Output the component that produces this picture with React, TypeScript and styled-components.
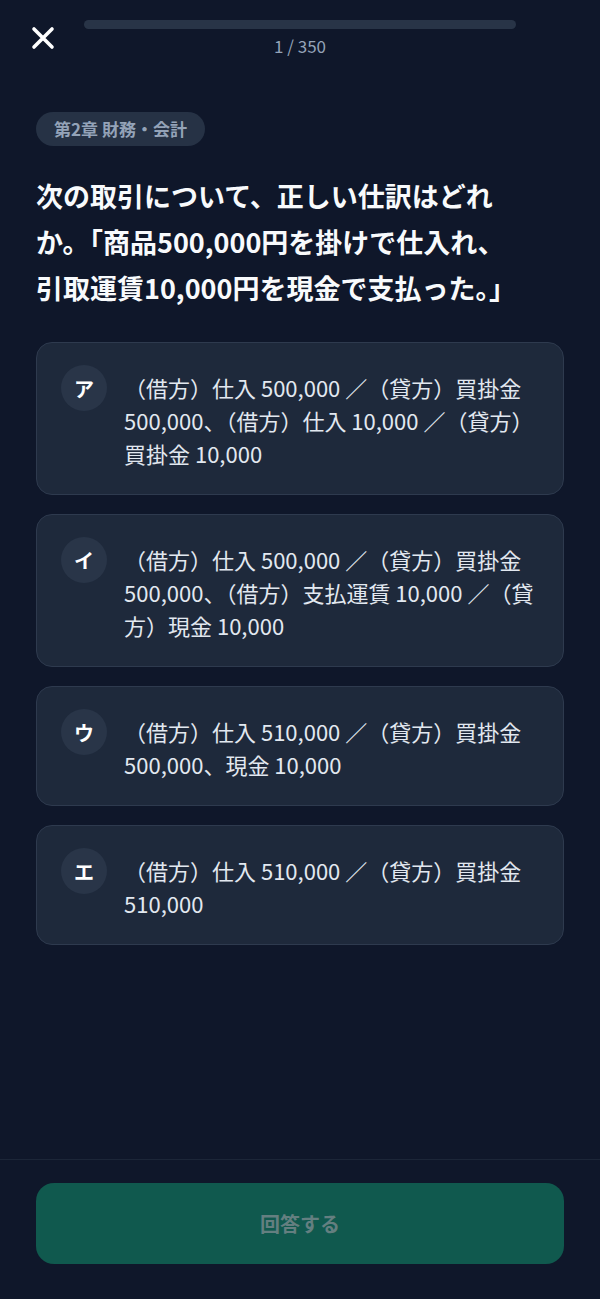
import React from 'react'
import styled, { createGlobalStyle } from 'styled-components'

const GlobalStyle = createGlobalStyle`
  html, body {
    margin: 0;
    padding: 0;
    background: #0f172a;
  }
  body {
    font-family: "Noto Sans CJK JP", "Noto Sans", sans-serif;
    color: #f8fafc;
  }
  * {
    box-sizing: border-box;
  }
`

const Screen = styled.div`
  min-height: 100vh;
  display: flex;
  flex-direction: column;
  background: #0f172a;
`

const Header = styled.header`
  display: grid;
  grid-template-columns: 84px 1fr 84px;
  padding-top: 20px;
`

const CloseButton = styled.button`
  justify-self: start;
  display: flex;
  align-items: center;
  justify-content: center;
  width: 24px;
  height: 24px;
  margin: 6px 0 0 31px;
  padding: 0;
  border: none;
  background: none;
  color: #ffffff;
  cursor: pointer;
`

const ProgressColumn = styled.div`
  display: flex;
  flex-direction: column;
  align-items: center;
`

const Track = styled.div`
  width: 100%;
  height: 9px;
  border-radius: 999px;
  background: #283447;
  overflow: hidden;
`

const Fill = styled.div`
  height: 100%;
  background: #10b981;
`

const Counter = styled.div`
  margin-top: 7px;
  font-size: 17px;
  line-height: 20px;
  color: #94a3b8;
`

const Content = styled.main`
  flex: 1;
  display: flex;
  flex-direction: column;
  align-items: flex-start;
  padding: 56px 36px 40px;
`

const Chip = styled.div`
  height: 34px;
  padding: 0 18px;
  border-radius: 999px;
  background: #263245;
  color: #94a3b8;
  font-size: 17px;
  font-weight: 700;
  line-height: 34px;
`

const Question = styled.h1`
  margin: 27px 0 0;
  max-width: 488px;
  font-size: 27px;
  font-weight: 700;
  line-height: 46px;
  color: #f8fafc;
`

const Options = styled.div`
  align-self: stretch;
  display: flex;
  flex-direction: column;
  gap: 19px;
  margin-top: 31px;
`

const OptionCard = styled.button`
  display: flex;
  align-items: flex-start;
  gap: 17px;
  width: 100%;
  padding: 22px 18px 24px 24px;
  border: 1px solid #2e3a4e;
  border-radius: 16px;
  background: #1e293b;
  text-align: left;
  font-family: inherit;
  cursor: pointer;
`

const Badge = styled.span`
  flex: 0 0 46px;
  width: 46px;
  height: 46px;
  border-radius: 50%;
  background: #293548;
  display: flex;
  align-items: center;
  justify-content: center;
  color: #ffffff;
  font-size: 20px;
  font-weight: 700;
`

const OptionText = styled.span`
  padding-top: 6px;
  font-size: 22px;
  line-height: 33px;
  color: #e2e8f0;
`

const Footer = styled.footer`
  border-top: 1px solid #1c2638;
  padding: 23px 36px 35px;
`

const SubmitButton = styled.button<{ $disabled?: boolean }>`
  width: 100%;
  height: 81px;
  border: none;
  border-radius: 18px;
  background: #10594e;
  color: #647f80;
  font-family: inherit;
  font-size: 20px;
  font-weight: 700;
  cursor: ${p => (p.$disabled ? 'default' : 'pointer')};
`

const options = [
  { label: 'ア', text: '（借方）仕入 500,000 ／（貸方）買掛金 500,000、（借方）仕入 10,000 ／（貸方）買掛金 10,000' },
  { label: 'イ', text: '（借方）仕入 500,000 ／（貸方）買掛金 500,000、（借方）支払運賃 10,000 ／（貸方）現金 10,000' },
  { label: 'ウ', text: '（借方）仕入 510,000 ／（貸方）買掛金 500,000、現金 10,000' },
  { label: 'エ', text: '（借方）仕入 510,000 ／（貸方）買掛金 510,000' },
]

const CloseIcon = () => (
  <svg width="24" height="24" viewBox="0 0 24 24" fill="none" stroke="currentColor" strokeWidth="3.6" strokeLinecap="round">
    <path d="M3 3L21 21M21 3L3 21" />
  </svg>
)

const App: React.FC = () => (
  <Screen>
    <GlobalStyle />
    <Header>
      <CloseButton aria-label="閉じる">
        <CloseIcon />
      </CloseButton>
      <ProgressColumn>
        <Track>
          <Fill style={{ width: `${(0 / 350) * 100}%` }} />
        </Track>
        <Counter>1 / 350</Counter>
      </ProgressColumn>
    </Header>
    <Content>
      <Chip>第2章 財務・会計</Chip>
      <Question>次の取引について、正しい仕訳はどれか。「商品500,000円を掛けで仕入れ、引取運賃10,000円を現金で支払った。」</Question>
      <Options>
        {options.map(o => (
          <OptionCard key={o.label}>
            <Badge>{o.label}</Badge>
            <OptionText>{o.text}</OptionText>
          </OptionCard>
        ))}
      </Options>
    </Content>
    <Footer>
      <SubmitButton $disabled>回答する</SubmitButton>
    </Footer>
  </Screen>
)

export default App
